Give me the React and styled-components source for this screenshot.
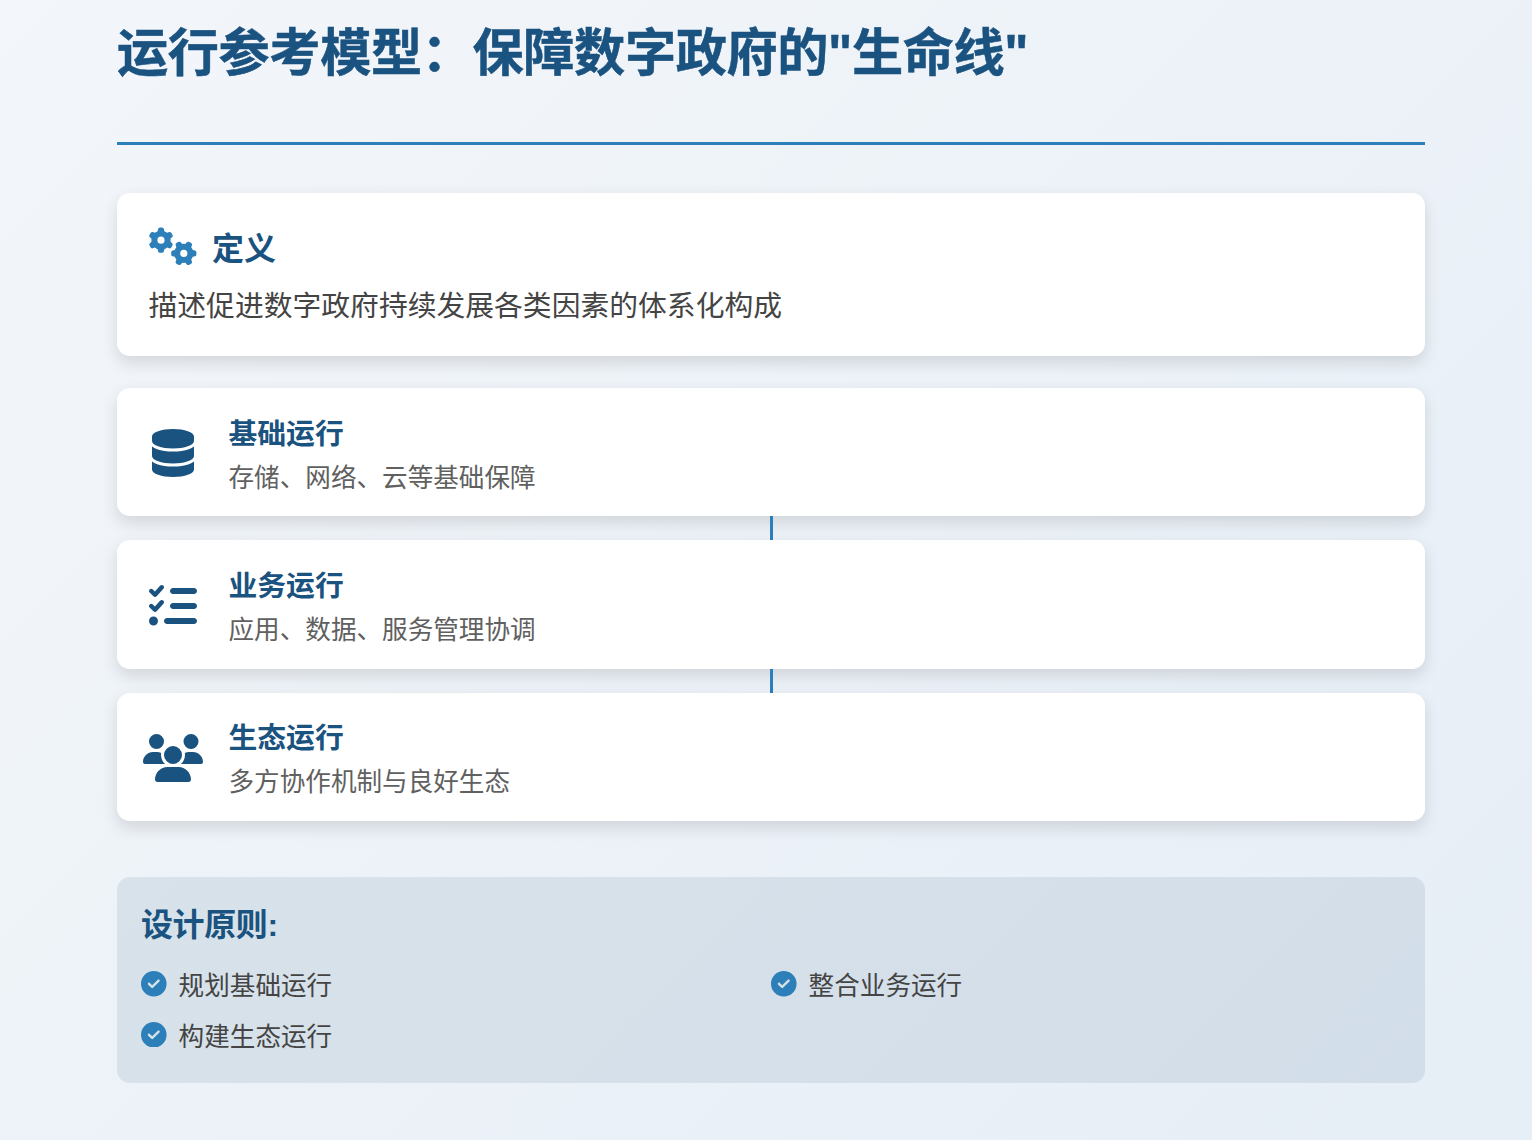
import React from 'react';
import styled, { createGlobalStyle } from 'styled-components';
import { FaGears, FaDatabase, FaListCheck, FaUsers, FaCircleCheck } from 'react-icons/fa6';

const GlobalStyle = createGlobalStyle`
  * { box-sizing: border-box; }
  html, body { margin: 0; padding: 0; }
  body {
    font-family: "Liberation Sans", "Noto Sans CJK SC", sans-serif;
    color: #444;
  }
`;

const Page = styled.div`
  width: 1532px;
  height: 1140px;
  overflow: hidden;
  padding: 0 107px 0 117px;
  background: linear-gradient(135deg, #f3f6fa 0%, #e6eef6 100%);
`;

const Title = styled.h1`
  margin: 0 0 48px;
  height: 145px;
  padding-top: 16px;
  font-size: 51.2px;
  line-height: 76px;
  font-weight: 700;
  letter-spacing: -0.4px;
  -webkit-text-stroke: 0.5px #1a5280;
  color: #1a5280;
  border-bottom: 3px solid #2c7fb8;
`;

const DefinitionCard = styled.section`
  height: 163px;
  margin-bottom: 32px;
  padding: 26px 32px 0;
  background: #fff;
  border-radius: 12.8px;
  box-shadow: 0 6.4px 16px rgba(0, 0, 0, 0.12);
`;

const DefinitionHead = styled.div`
  display: flex;
  align-items: center;
  gap: 15px;
  height: 54px;
  margin-bottom: 12px;
  color: #1a5280;
  font-size: 32px;
  font-weight: 700;

  svg {
    width: 48px;
    height: 38.4px;
    color: #2c7fb8;
  }
`;

const DefinitionText = styled.p`
  margin: 0 0 0 -0.5px;
  font-size: 28.8px;
  line-height: 43px;
`;

const Layers = styled.div`
  display: flex;
  flex-direction: column;
`;

const Layer = styled.article`
  position: relative;
  display: flex;
  align-items: center;
  height: 128.4px;
  margin-bottom: 24px;
  padding: 0 32px;
  background: #fff;
  border-radius: 12.8px;
  box-shadow: 0 6.4px 16px rgba(0, 0, 0, 0.12);

  &:last-child { margin-bottom: 0; }

  &:not(:last-child)::after {
    content: "";
    position: absolute;
    left: 50%;
    bottom: -24px;
    width: 3px;
    height: 24px;
    margin-left: -1.5px;
    background: #2c7fb8;
  }
`;

const LayerIcon = styled.div`
  display: flex;
  justify-content: center;
  flex: 0 0 48px;
  min-width: 0;
  margin: 2px 31.5px 0 0;
  color: #1a5280;

  svg {
    flex: none;
    width: ${(props) => props.$wide ? 60 : 48}px;
    height: 48px;
  }
`;

const LayerBody = styled.div`
  padding-top: 5px;
`;

const LayerTitle = styled.h3`
  margin: 0 0 3px;
  font-size: 28.8px;
  line-height: 43px;
  font-weight: 700;
  color: #1a5280;
`;

const LayerText = styled.p`
  margin: 0;
  font-size: 25.6px;
  line-height: 38px;
  color: #606060;
`;

const Principles = styled.section`
  height: 206px;
  margin-top: 56px;
  padding: 24px;
  background: rgba(26, 82, 118, 0.1);
  border-radius: 12.8px;
`;

const PrinciplesTitle = styled.h3`
  margin: 0 0 18px;
  font-size: 32px;
  line-height: 48px;
  font-weight: 700;
  letter-spacing: -0.4px;
  color: #1a5280;
`;

const PrincipleGrid = styled.ul`
  display: grid;
  grid-template-columns: 1fr 1fr;
  margin: 0;
  padding: 0;
  list-style: none;
`;

const Principle = styled.li`
  display: flex;
  align-items: flex-start;
  gap: 12px;
  height: 50.4px;
  font-size: 25.6px;
  line-height: 38px;

  svg {
    flex: none;
    margin-top: 4px;
    color: #2c7fb8;
  }
`;

const layers = [
  { icon: FaDatabase, title: '基础运行', text: '存储、网络、云等基础保障' },
  { icon: FaListCheck, title: '业务运行', text: '应用、数据、服务管理协调' },
  { icon: FaUsers, title: '生态运行', text: '多方协作机制与良好生态', wide: true },
];

const principles = ['规划基础运行', '整合业务运行', '构建生态运行'];

const App = () => (
  <Page>
    <GlobalStyle />
    <Title>运行参考模型：保障数字政府的"生命线"</Title>
    <DefinitionCard>
      <DefinitionHead>
        <FaGears />
        定义
      </DefinitionHead>
      <DefinitionText>描述促进数字政府持续发展各类因素的体系化构成</DefinitionText>
    </DefinitionCard>
    <Layers>
      {layers.map(({ icon: Icon, title, text, wide }) => (
        <Layer key={title}>
          <LayerIcon $wide={wide}><Icon /></LayerIcon>
          <LayerBody>
            <LayerTitle>{title}</LayerTitle>
            <LayerText>{text}</LayerText>
          </LayerBody>
        </Layer>
      ))}
    </Layers>
    <Principles>
      <PrinciplesTitle>设计原则:</PrinciplesTitle>
      <PrincipleGrid>
        {principles.map((item) => (
          <Principle key={item}>
            <FaCircleCheck size={25.6} />
            {item}
          </Principle>
        ))}
      </PrincipleGrid>
    </Principles>
  </Page>
);

export default App;
